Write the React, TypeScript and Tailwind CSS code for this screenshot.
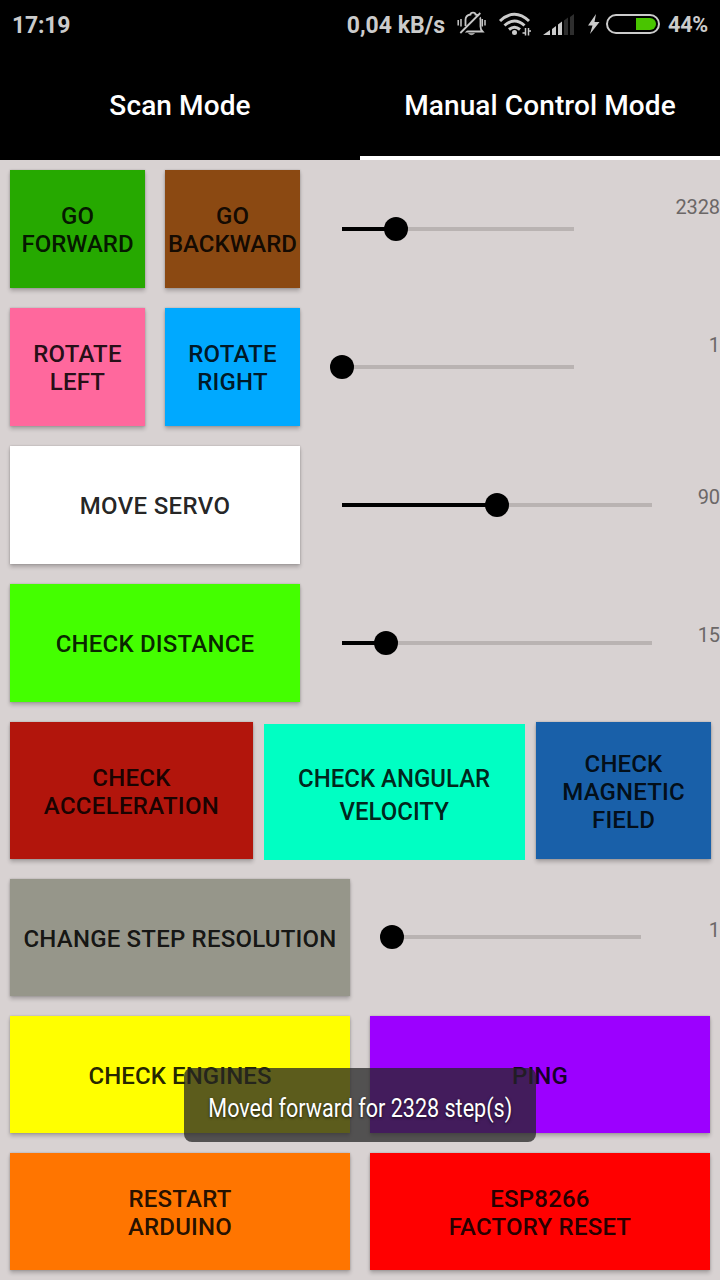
import type { ReactNode } from "react";

type ButtonProps = { className: string; children: ReactNode };

function PadButton({ className, children }: ButtonProps) {
  return (
    <button
      className={`flex shrink-0 items-center justify-center whitespace-nowrap pt-[2px] text-center text-[24px] font-medium leading-[28px] text-black/87 shadow-[0_3px_4px_rgba(0,0,0,0.22),0_0_2px_rgba(0,0,0,0.2)] ${className}`}
    >
      <span>{children}</span>
    </button>
  );
}

type SliderProps = { className: string; position: number };

function Slider({ className, position }: SliderProps) {
  return (
    <div className={`relative h-1 shrink-0 bg-[#b9b3b2] ${className}`}>
      <div className="h-1 bg-black" style={{ width: position }} />
      <div
        className="absolute -top-[10px] size-6 rounded-full bg-black"
        style={{ left: position - 12 }}
      />
    </div>
  );
}

function Value({ className, children }: ButtonProps) {
  return (
    <span className={`ml-auto text-[20px] leading-6 tracking-[-0.1px] text-[#6b6767] ${className}`}>{children}</span>
  );
}

function StatusBar() {
  return (
    <div className="flex h-[50px] items-center pl-3 pr-3 text-[23px] font-bold leading-[50px] text-[#cbcbcb]">
      <span className="pt-[2px] tracking-[-0.2px]">17:19</span>
      <span className="ml-auto pt-[2px]">0,04 kB/s</span>
      <svg className="ml-3 h-[50px] w-[30px] shrink-0" viewBox="457 0 30 50" fill="none" stroke="#c7c7c7" strokeWidth="1.8">
        <path d="M465 31.500h17.500c-1.500-1.500-2-3-2-5V20c0-3-2-5-5-5.500 0-2.500-5-2.500-5 0-3.500.5-5 3-5 5.500v6" />
        <path d="M461.500 34.500 481.500 14.500" stroke="#000" strokeWidth="2" />
        <path d="M460.300 33 480.300 13" strokeWidth="1.800" />
        <path d="M468.500 33.500h6q-3 2.500-6 0z" fill="#c7c7c7" strokeWidth="0.5" />
        <path d="M458.200 20v5.500M461 19v7.500M482.300 19v7.500M485 20v5.500" strokeWidth="1.500" />
      </svg>
      <svg className="ml-[11px] h-[50px] w-[34px] shrink-0" viewBox="498 0 34 50" fill="none" stroke="#cbcbcb" strokeWidth="3">
        <path d="M500 21q14.500-13.500 29 0M504.500 25.500q10-9 20 0M509 29.500q5.500-4.500 11 0" />
        <circle cx="514.500" cy="32.500" r="2.500" fill="#cbcbcb" stroke="none" />
        <path d="M525.500 28v7.500M528.500 28v7.500M522.500 33h3M528.500 31h2.500" strokeWidth="1.500" />
      </svg>
      <svg className="ml-[11px] h-[50px] w-[32px] shrink-0" viewBox="543 0 32 50">
        <path fill="#cbcbcb" d="M543 35 550 30v5zM552 29l4-3v9h-4zM558 24.500l4-3V35h-4z" />
        <path fill="#2e2e2e" d="M564 20.500l4-3V35h-4zM570 17l4-3v21h-4z" />
      </svg>
      <svg className="ml-[12px] h-[50px] w-[74px] shrink-0" viewBox="587 0 74 50">
        <path fill="#cbcbcb" d="M596 14 588 25.500h4.500L590 34l9.500-12h-5z" />
        <rect x="607" y="15" width="52" height="18" rx="9" fill="#000" stroke="#cbcbcb" strokeWidth="2" />
        <path fill="#49c500" d="M636 18h14a6 6 0 0 1 0 12h-14z" />
      </svg>
      <span className="ml-[7px] w-10 whitespace-nowrap text-[21.5px] tracking-[-0.2px]">44%</span>
    </div>
  );
}

export default function App() {
  return (
    <div className="relative flex h-[1280px] w-[720px] flex-col overflow-hidden bg-[#d8d2d2] font-['Roboto',sans-serif]">
      <header className="h-[160px] shrink-0 bg-black">
        <StatusBar />
        <nav className="grid h-[110px] grid-cols-2 text-center text-[28px] font-medium leading-[112px] tracking-[0.1px] text-white">
          <div className="h-[110px]">Scan Mode</div>
          <div className="h-[110px] border-b-4 border-white">Manual Control Mode</div>
        </nav>
      </header>

      <main className="flex flex-col gap-5 pl-[10px] pt-[10px]">
        <section className="flex h-[118px] items-start">
          <PadButton className="h-[118px] w-[135px] bg-[#26a900]">GO<br />FORWARD</PadButton>
          <PadButton className="ml-5 h-[118px] w-[135px] bg-[#8b4912]">GO<br />BACKWARD</PadButton>
          <Slider className="ml-[42px] mt-[57px] w-[232px]" position={54} />
          <Value className="mt-[25px]">2328</Value>
        </section>

        <section className="flex h-[118px] items-start">
          <PadButton className="h-[118px] w-[135px] bg-[#ff689d] tracking-[0.2px]">ROTATE<br />LEFT</PadButton>
          <PadButton className="ml-5 h-[118px] w-[135px] bg-[#00a9ff] tracking-[0.2px]">ROTATE<br />RIGHT</PadButton>
          <Slider className="ml-[42px] mt-[57px] w-[232px]" position={0} />
          <Value className="mt-[25px]">1</Value>
        </section>

        <section className="flex h-[118px] items-start">
          <PadButton className="h-[118px] w-[290px] bg-white tracking-[0.35px]">MOVE SERVO</PadButton>
          <Slider className="ml-[42px] mt-[57px] w-[310px]" position={155} />
          <Value className="mt-[39px]">90</Value>
        </section>

        <section className="flex h-[118px] items-start">
          <PadButton className="h-[118px] w-[290px] bg-[#44ff00] tracking-[0.2px]">CHECK DISTANCE</PadButton>
          <Slider className="ml-[42px] mt-[57px] w-[310px]" position={44} />
          <Value className="mt-[39px]">15</Value>
        </section>

        <section className="flex h-[137px] items-start">
          <PadButton className="h-[137px] w-[243px] bg-[#b2150c] tracking-[0.3px]">CHECK<br />ACCELERATION</PadButton>
          <button className="ml-[11px] mt-[2px] flex h-[136px] w-[261px] items-center justify-center bg-[#00ffc3] text-center text-[26.5px] font-medium leading-[33px] text-black/87">
            <span className="scale-x-[0.905] whitespace-nowrap pt-[3px]">CHECK ANGULAR<br />VELOCITY</span>
          </button>
          <PadButton className="ml-[11px] h-[137px] w-[175px] bg-[#1960a9] tracking-[0.15px]">CHECK<br />MAGNETIC<br />FIELD</PadButton>
        </section>

        <section className="flex h-[117px] items-start">
          <PadButton className="h-[117px] w-[340px] bg-[#96968a] tracking-[0.2px]">CHANGE STEP RESOLUTION</PadButton>
          <Slider className="ml-[42px] mt-[56px] w-[249px]" position={0} />
          <Value className="mt-[39px]">1</Value>
        </section>

        <section className="flex h-[117px] gap-5">
          <PadButton className="h-[117px] w-[340px] bg-[#ffff00] tracking-[0.1px]">CHECK ENGINES</PadButton>
          <PadButton className="h-[117px] w-[340px] bg-[#9c00ff] tracking-[0.1px]">PING</PadButton>
        </section>

        <section className="flex h-[117px] gap-5">
          <PadButton className="h-[117px] w-[340px] bg-[#ff7500] tracking-[0.2px]">RESTART<br />ARDUINO</PadButton>
          <PadButton className="h-[117px] w-[340px] bg-[#ff0000] tracking-[0.2px]">ESP8266<br />FACTORY RESET</PadButton>
        </section>
      </main>

      <div className="absolute left-[184px] top-[1068px] flex h-[74px] w-[352px] items-center justify-center rounded-[8px] bg-[#262626]/75 text-[25px] text-white">
        <span className="scale-x-[0.862] whitespace-nowrap pt-2 [text-shadow:0_1px_3px_rgba(0,0,0,0.7)]">Moved forward for 2328 step(s)</span>
      </div>
    </div>
  );
}
